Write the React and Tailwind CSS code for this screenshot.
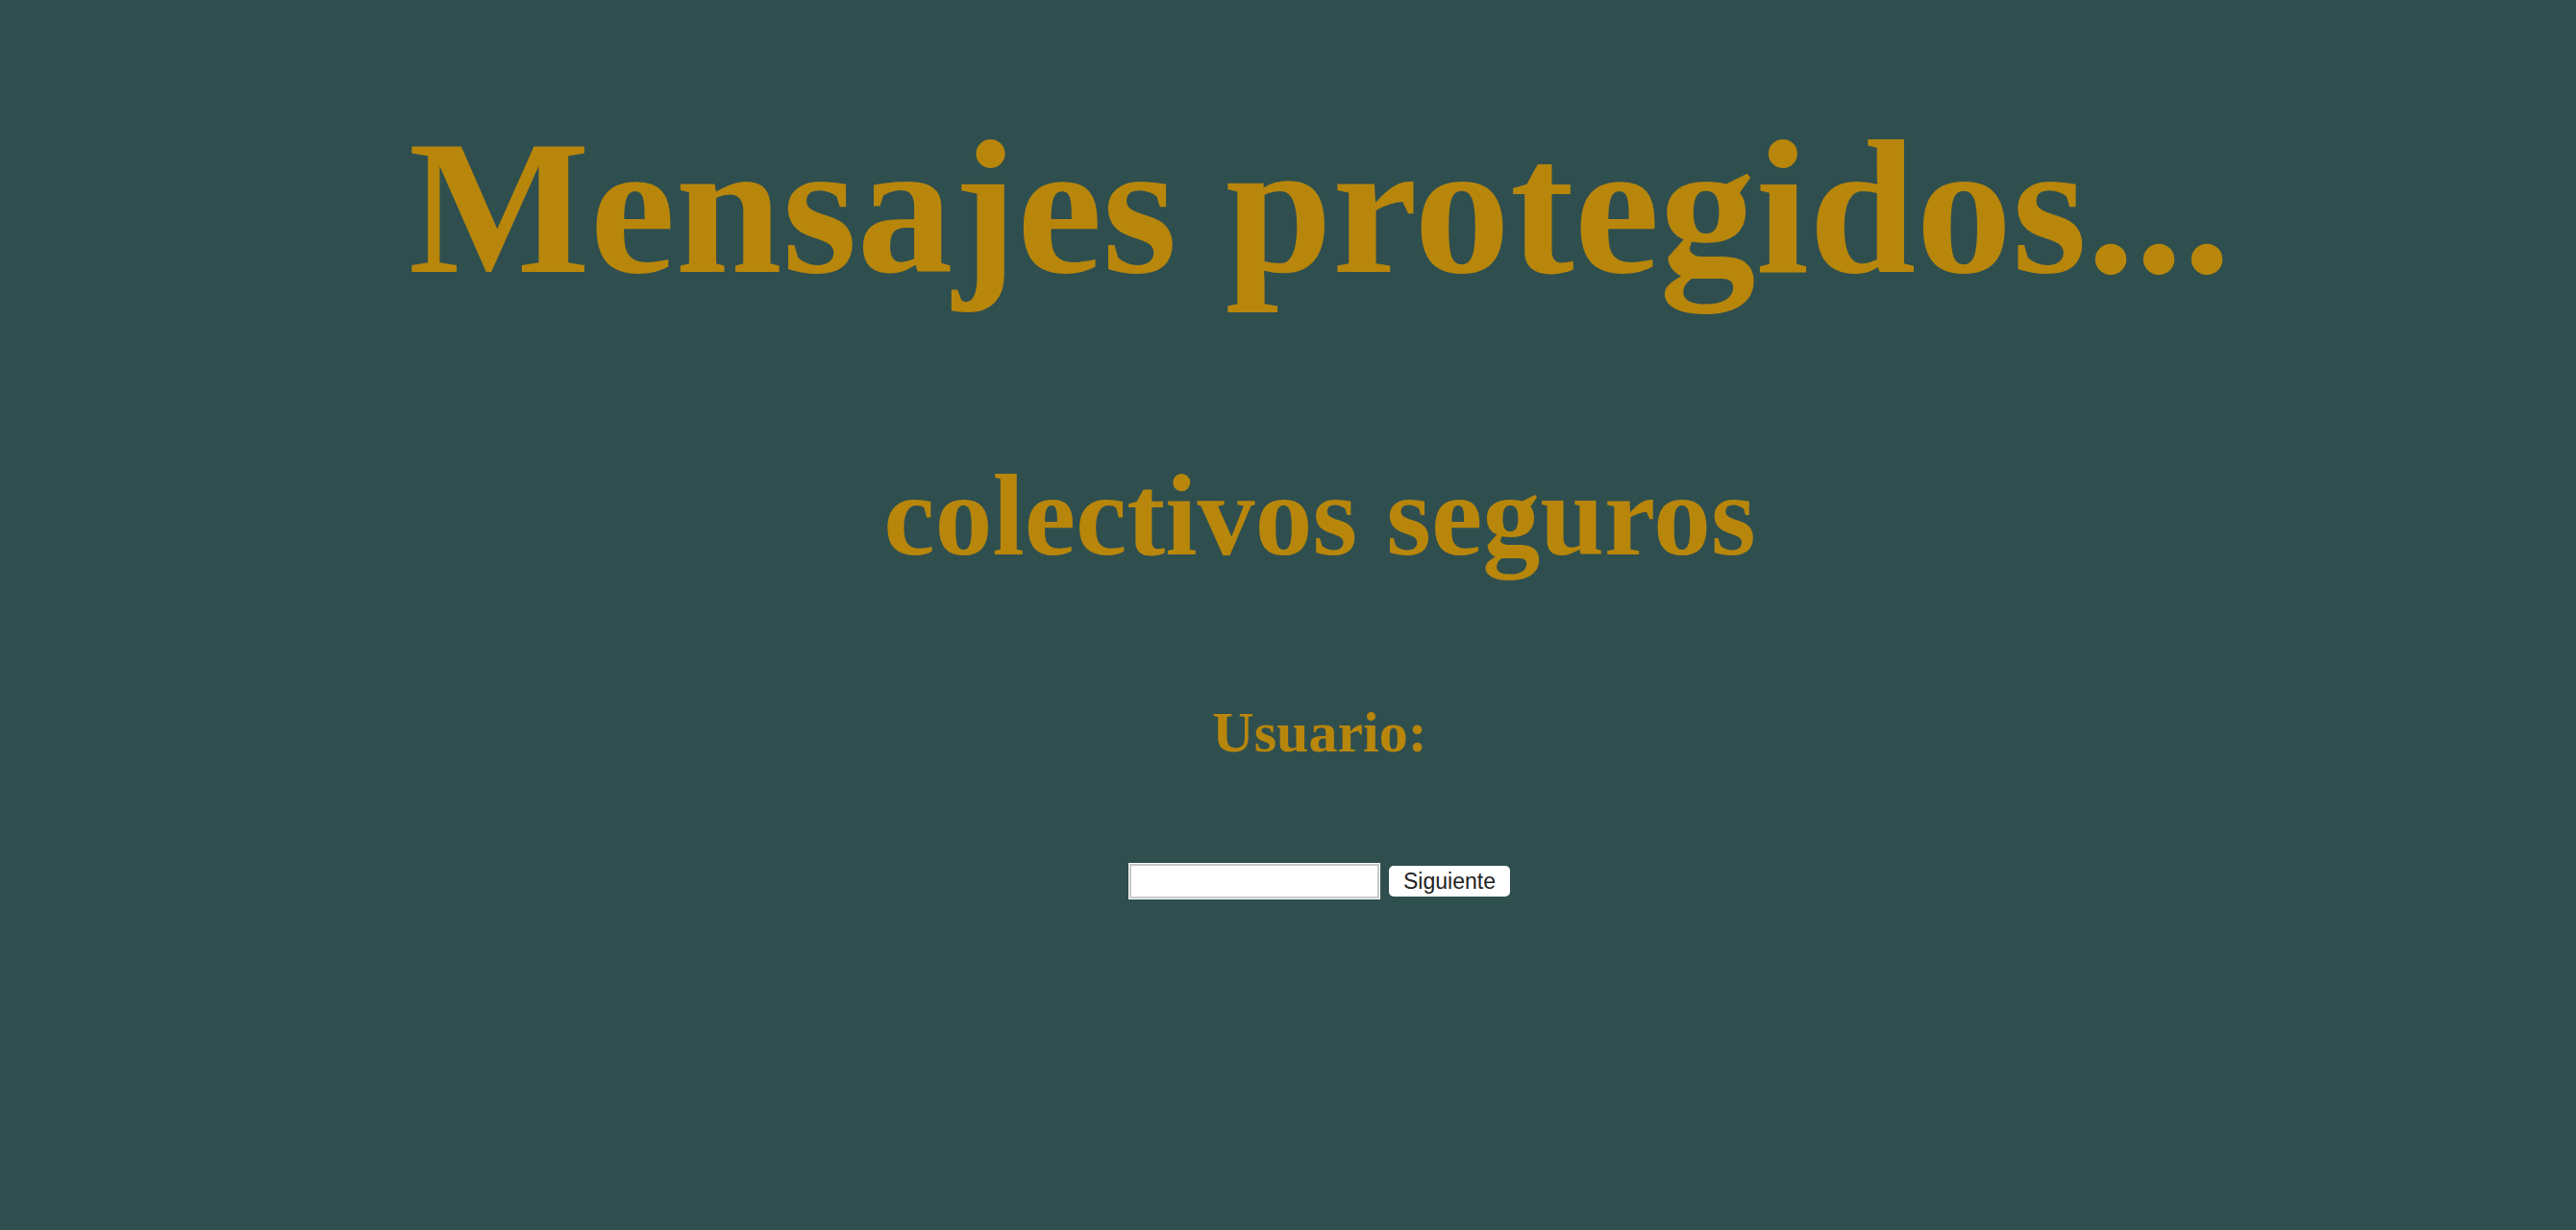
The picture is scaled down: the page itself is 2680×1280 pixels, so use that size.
export default function App() {
  return (
    <div className="min-h-screen w-full bg-[#2f4f4f] font-['Liberation_Serif',serif] text-[#b8860b]">
      <div className="flex flex-col items-center pl-[66px] pt-[116px]">
        <h1 className="text-[200px] font-bold leading-none">Mensajes protegidos...</h1>
        <h2 className="mt-[161px] text-[120px] font-bold leading-none">colectivos seguros</h2>
        <h3 className="mt-[135px] text-[60px] font-bold leading-none">Usuario:</h3>
        <form className="mt-[107px] flex items-center gap-[10px]">
          <input
            type="text"
            className="h-[36px] w-[260px] border-2 border-[#c8c8c8] bg-white ring-1 ring-white outline-none"
          />
          <button
            type="button"
            className="h-[32px] w-[126px] rounded-[5px] bg-white font-['Liberation_Sans',sans-serif] text-[23px] leading-none text-[#222]"
          >
            Siguiente
          </button>
        </form>
      </div>
    </div>
  );
}
